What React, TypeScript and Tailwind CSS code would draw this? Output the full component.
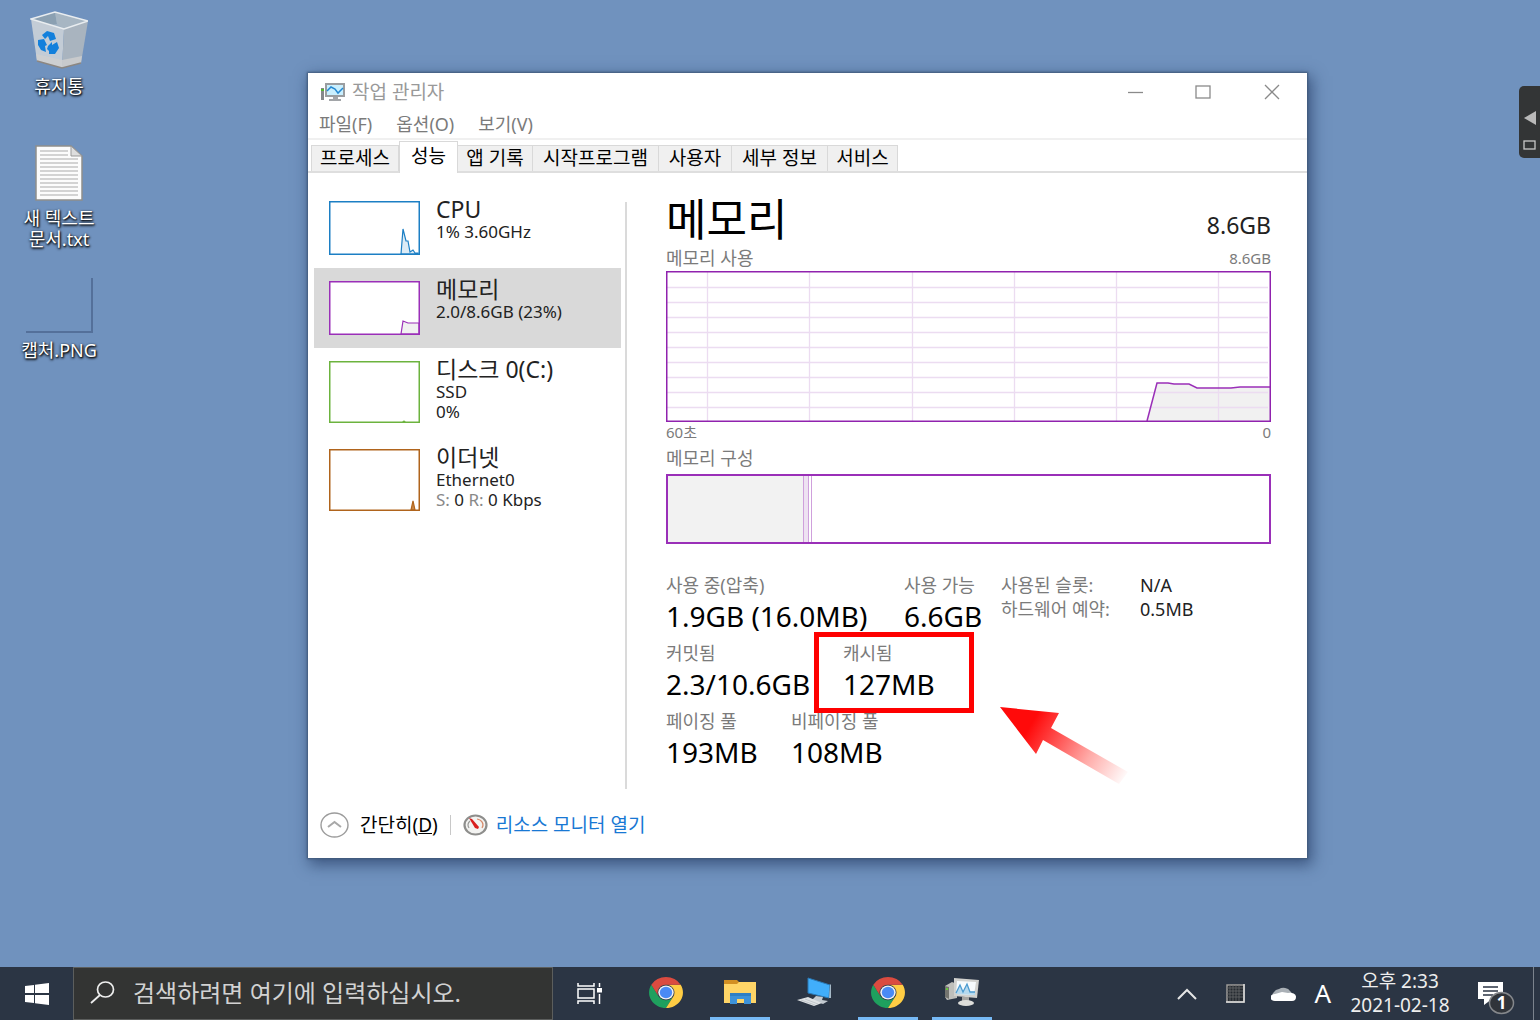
import type { ReactNode } from "react";

const tabs = [
  { label: "프로세스", width: "w-[88px]" },
  { label: "성능", width: "w-[59px]", active: true },
  { label: "앱 기록", width: "w-[75px]" },
  { label: "시작프로그램", width: "w-[126px]" },
  { label: "사용자", width: "w-[73px]" },
  { label: "세부 정보", width: "w-[96px]" },
  { label: "서비스", width: "w-[70px]" },
];

function RecycleBinIcon() {
  return (
    <svg width="58" height="58" viewBox="0 0 58 58" aria-hidden="true">
      <path d="M1 8 25 1 58 10 34 18Z" fill="#9fb2c4" />
      <path d="M1 8 25 1 27 13 9 15Z" fill="#8ba0b2" />
      <path d="M25 1 58 10 34 18 27 13Z" fill="#a7b6c3" />
      <path d="M1 8 34 18 32 57 7 50Z" fill="#c3ccd6" />
      <path d="M34 18 58 10 51 52 32 57Z" fill="#a9b4bf" />
      <path d="M6 43 32 49 52 45 51 52 32 57 7 50Z" fill="#cfcfcf" opacity=".8" />
      <path d="M7 50 32 57 51 52" fill="none" stroke="#8c8782" strokeWidth="1.5" />
      <path d="M1 8 25 1 58 10 34 18Z" fill="none" stroke="#e9edf0" strokeWidth="1.5" />
      <path d="m12 24 5-4 7 2 2 6-6 2-2-5-3 3Z" fill="#1380dc" />
      <path d="m8 29 6-1 3 6-2 1 1 6-5-2-3-5Z" fill="#1380dc" />
      <path d="m18 35 4-4v3l5-3 2 6-4 6-6 0 0-3-2-2Z" fill="#1380dc" />
    </svg>
  );
}

function TextFileIcon() {
  return (
    <svg width="48" height="56" viewBox="0 0 48 56" aria-hidden="true">
      <path d="M1 1H36L47 11V55H1Z" fill="#fcfcfc" stroke="#8f8f8c" strokeWidth="1.5" />
      <path d="M36 1V11H47Z" fill="#dedede" stroke="#999" />
      <path d="M5 6H33M5 10H33M5 14H43M5 18H43M5 22H43M5 26H43M5 30H43M5 34H43M5 38H43M5 42H43M5 46H43M5 50H43" stroke="#a9a9a9" strokeWidth="1.2" />
    </svg>
  );
}

function ChromeIcon() {
  return (
    <svg width="34" height="31" viewBox="2 2 44 44" preserveAspectRatio="none" aria-hidden="true">
      <path d="M5 13 14.5 29.5A11 11 0 0 0 33.5 29.5L24 46A22 22 0 0 1 5 13Z" fill="#1fa05e" />
      <path d="M43 13A22 22 0 0 1 24 46L33.5 29.5A11 11 0 0 0 24 13Z" fill="#ffcd44" />
      <path d="M5 13A22 22 0 0 1 43 13H24A11 11 0 0 0 14.5 29.5Z" fill="#db4b40" />
      <circle cx="24" cy="24" r="10" fill="#f1f1f1" />
      <circle cx="24" cy="24" r="8" fill="#4a8af5" />
    </svg>
  );
}

function FolderIcon() {
  return (
    <svg width="34" height="26" viewBox="0 0 34 26" aria-hidden="true">
      <path d="M1 1H14L16 3V6H1Z" fill="#d28f23" />
      <path d="M16 3H33V24H1V5H14Z" fill="#ffd567" />
      <path d="M7 14H28V25H21V20H14V25H7Z" fill="#3d92d9" />
      <path d="M7 14H28V17H7Z" fill="#2f7fc4" />
    </svg>
  );
}

function RemoteIcon() {
  return (
    <svg width="36" height="30" viewBox="0 0 36 30" aria-hidden="true">
      <path d="M12 1 34 8 33 21 12 16Z" fill="#41aefb" stroke="#2a78b4" />
      <path d="M34 8 35 7V21L33 21Z" fill="#a6b9c7" />
      <path d="M20 19 27 20 26 23 32 24 27 27 16 23Z" fill="#c3cad0" />
      <path d="M1 23 12 20 26 26 18 29Z" fill="#dfe2e4" />
      <path d="M5 23 19 28M9 22 22 27" stroke="#b9bfc4" strokeWidth=".8" />
    </svg>
  );
}

function TaskManagerIcon() {
  return (
    <svg width="36" height="30" viewBox="0 0 36 30" aria-hidden="true">
      <path d="M1 9 8 5 13 7V21L3 23 1 20Z" fill="#bfbfbb" />
      <path d="M1 9 5 10V22L1 20Z" fill="#74746f" />
      <path d="M2 12H4" stroke="#65c73c" strokeWidth="2" />
      <path d="m10 1 25 2-2 18-23-2Z" fill="#d2d2cf" />
      <path d="m13 4 19 1-2 13-18-1Z" fill="#f7fbfd" />
      <path d="m12 16 4-8 3 7 4-8 3 8 5 0V18L12 17Z" fill="#b5d9ee" />
      <path d="m12 16 4-8 3 7 4-8 3 8 5 0" fill="none" stroke="#4c9bd0" strokeWidth="1.3" />
      <path d="M18 20H25V24H18Z" fill="#a6a6a3" />
      <ellipse cx="22" cy="26" rx="8" ry="3" fill="#dededb" />
    </svg>
  );
}

function SmallMonitorIcon() {
  return (
    <svg width="26" height="20" viewBox="0 0 26 20" aria-hidden="true">
      <path d="M1 6H4V18H1Z" fill="#85888b" />
      <path d="M1 8H4" stroke="#55b52f" strokeWidth="2" />
      <rect x="6" y="2" width="18" height="12" fill="#c9effe" stroke="#9a9da0" strokeWidth="2" />
      <path d="m7 9 4-4 4 2 3 4 5-5" fill="none" stroke="#2488d2" strokeWidth="1.5" />
      <path d="M13 15H18V17H21V19H9V17H13Z" fill="#a2a5a8" />
    </svg>
  );
}

function GaugeIcon() {
  return (
    <svg width="25" height="22" viewBox="0 0 25 22" aria-hidden="true">
      <ellipse cx="12.5" cy="11" rx="11" ry="9.5" fill="#f3f3f1" stroke="#8e8e8c" strokeWidth="2.2" />
      <path d="M6 14A7 6 0 0 1 7 7" fill="none" stroke="#9a9a98" strokeWidth="1.2" />
      <path d="M14 5A7 6 0 0 1 19 14" fill="none" stroke="#d88c6d" strokeWidth="1.2" />
      <path d="m6 4 3 1 7 8-1 2-3-1Z" fill="#d91f1f" />
    </svg>
  );
}

function DesktopItem({ icon, children }: { icon: ReactNode; children: ReactNode }) {
  return (
    <button className="flex h-[132px] w-[118px] flex-col items-center pt-3 text-[18px] leading-[21px] text-white [text-shadow:1px_1px_2px_#000,0_1px_3px_#000]">
      <span className="mb-[7px] flex h-[57px] items-end justify-center">{icon}</span>
      <span>{children}</span>
    </button>
  );
}

type DeviceProps = {
  name: string;
  lines: ReactNode[];
  stroke: string;
  area: string;
  fill?: string;
  tall?: boolean;
  selected?: boolean;
};

function DeviceRow({ name, lines, stroke, area, fill = "#f1f1f1", tall, selected }: DeviceProps) {
  const height = tall ? 62 : 54;
  return (
    <button className={`flex w-full items-start pl-[15px] text-left ${tall ? "h-[88px]" : "h-[80px]"} ${selected ? "bg-[#d9d9d9]" : ""}`}>
      <svg className="mt-[13px] shrink-0" width="91" height={height} viewBox={`0 0 91 ${height}`} aria-hidden="true">
        <rect x="1" y="1" width="89" height={height - 2} fill="#fff" />
        <path d={area} fill={fill} stroke={stroke} strokeWidth="1.2" />
        <rect x=".75" y=".75" width="89.5" height={height - 1.5} fill="none" stroke={stroke} strokeWidth="1.5" />
      </svg>
      <span className="ml-4 flex flex-col pt-2">
        <span className="text-[23px] leading-[26px] text-[#222]">{name}</span>
        {lines.map((line, idx) => (
          <span key={idx} className="text-[17px] leading-5 text-[#222]">{line}</span>
        ))}
      </span>
    </button>
  );
}

function MemoryGraph() {
  const rows = [16, 31, 46, 61, 76, 91, 106, 121, 136];
  const cols = [41, 143, 246, 348, 450, 552];
  return (
    <svg className="block h-[151px] w-full" viewBox="0 0 605 151" preserveAspectRatio="none" role="img" aria-label="메모리 사용">
      <path d="M481 150 491 112H502L508 113H523L531 117H565L574 116H604V150Z" fill="#f1f1f1" />
      <g stroke="#ecdcf1" strokeWidth="1.3">
        {rows.map((y) => <path key={y} d={`M1 ${y + 0.5}H602`} />)}
        {cols.map((x) => <path key={x} d={`M${x + 0.5} 1V150`} />)}
      </g>
      <path d="M481 150 491 112H502L508 113H523L531 117H565L574 116H604" fill="none" stroke="#9a2fb8" strokeWidth="1.5" />
      <rect x=".75" y=".75" width="603.5" height="149.5" fill="none" stroke="#9022ae" strokeWidth="1.5" />
    </svg>
  );
}

function Stat({ label, value, width = "" }: { label: string; value: string; width?: string }) {
  return (
    <div className={`shrink-0 whitespace-nowrap ${width}`}>
      <dt className="text-[18px] leading-6 text-[#7b7b7b]">{label}</dt>
      <dd className="text-[28px] leading-[38px] text-black">{value}</dd>
    </div>
  );
}

function TaskManager() {
  return (
    <section className="absolute top-[73px] right-[233px] left-[308px] bg-white shadow-[0_0_2px_1px_#3f5878,3px_5px_14px_2px_rgba(20,40,80,0.55)]">
      <header className="flex h-[37px] items-center pl-3">
        <SmallMonitorIcon />
        <h1 className="ml-[6px] flex-1 text-[19px] leading-6 text-[#999]">작업 관리자</h1>
        <div className="flex text-[#8a8a8a]">
          <button aria-label="최소화" className="flex h-8 w-[68px] items-center justify-center">
            <svg width="16" height="16" viewBox="0 0 16 16"><path d="M1 8.5H16" stroke="currentColor" strokeWidth="1.3" /></svg>
          </button>
          <button aria-label="최대화" className="flex h-8 w-[68px] items-center justify-center">
            <svg width="16" height="16" viewBox="0 0 16 16"><rect x="1" y="2" width="14" height="12" fill="none" stroke="currentColor" strokeWidth="1.3" /></svg>
          </button>
          <button aria-label="닫기" className="flex h-8 w-[70px] items-center justify-center">
            <svg width="16" height="16" viewBox="0 0 16 16"><path d="M1 1 15 15M15 1 1 15" stroke="currentColor" strokeWidth="1.3" /></svg>
          </button>
        </div>
      </header>

      <nav className="flex h-[30px] items-center gap-6 border-b-2 border-[#f0f0f0] pl-[11px] text-[18px] leading-6 text-[#7b7b7b]">
        <button>파일(F)</button>
        <button>옵션(O)</button>
        <button>보기(V)</button>
      </nav>

      {/* Tabs */}
      <div role="tablist" className="flex h-[33px] items-end border-b-2 border-[#dedede] pl-[3px] text-[19px] leading-6 text-black">
        {tabs.map((tab) => (
          <button
            key={tab.label}
            role="tab"
            aria-selected={!!tab.active}
            className={`shrink-0 whitespace-nowrap border-[#d9d9d9] ${tab.width} ${
              tab.active ? "-mb-[2px] h-[32px] border border-b-0 bg-white pb-1" : "h-[26px] border-t border-r bg-[#f0f0f0] pb-[2px] first:border-l"
            }`}
          >
            {tab.label}
          </button>
        ))}
      </div>

      <div className="flex">
        {/* Devices */}
        <aside className="w-[313px] shrink-0 pt-[15px] pl-[6px]">
          <DeviceRow name="CPU" lines={["1% 3.60GHz"]} stroke="#1c7fc4" fill="#dcebf5" area="M72 53 74 28 77 40H79L81 51 84 49 86 52 89 52V53Z" />
          <DeviceRow name="메모리" lines={["2.0/8.6GB (23%)"]} stroke="#9a2fb8" area="M72 53 74 40 79 42H90V53Z" selected />
          <DeviceRow name="디스크 0(C:)" lines={["SSD", "0%"]} stroke="#6cb33e" area="M74 61 75 60 76 61Z" tall />
          <DeviceRow
            name="이더넷"
            lines={[
              "Ethernet0",
              <>
                <span className="text-[#888]">S:</span> 0 <span className="text-[#888]">R:</span> 0 Kbps
              </>,
            ]}
            stroke="#b0641c"
            fill="#c98848"
            area="M82 61 84 52 86 61Z"
            tall
          />
        </aside>
        <div className="mt-[29px] ml-1 w-[2px] shrink-0 bg-[#dadada]" />

        {/* Memory details */}
        <main className="min-w-0 flex-1 pt-[18px] pr-9 pb-[18px] pl-[39px]">
          <div className="flex h-[56px] items-center justify-between">
            <h2 className="text-[44px] leading-[56px] text-black">메모리</h2>
            <span className="pt-3 text-[23px] leading-8 text-[#222]">8.6GB</span>
          </div>
          <div className="flex h-6 items-center justify-between pb-[3px] text-[#7b7b7b]">
            <span className="text-[18px] leading-5">메모리 사용</span>
            <span className="text-[15px] leading-5">8.6GB</span>
          </div>
          <MemoryGraph />
          <div className="flex h-5 items-center justify-between text-[15px] text-[#7b7b7b]">
            <span>60초</span>
            <span>0</span>
          </div>
          <h3 className="pt-[2px] pb-[2px] text-[18px] leading-7 text-[#7b7b7b]">메모리 구성</h3>
          <div className="flex h-[70px] border-2 border-[#9a2fb8]">
            <div className="w-[22.5%] bg-[#f2f2f2]" />
            <div className="w-[6px] border-x border-[#cfa0dc] bg-[#eee2f2]" />
            <div className="w-[3px] border-r border-[#cfa0dc]" />
          </div>

          <div className="relative mt-[29px] flex">
            <dl className="flex w-[335px] shrink-0 flex-col gap-[6px]">
              <div className="flex">
                <Stat label="사용 중(압축)" value="1.9GB (16.0MB)" width="w-[238px]" />
                <Stat label="사용 가능" value="6.6GB" />
              </div>
              <div className="flex">
                <Stat label="커밋됨" value="2.3/10.6GB" width="w-[177px]" />
                <Stat label="캐시됨" value="127MB" />
              </div>
              <div className="flex">
                <Stat label="페이징 풀" value="193MB" width="w-[125px]" />
                <Stat label="비페이징 풀" value="108MB" />
              </div>
            </dl>
            <dl className="grid h-12 grid-cols-[139px_auto] text-[18px] leading-6 whitespace-nowrap">
              <dt className="text-[#7b7b7b]">사용된 슬롯:</dt>
              <dd className="text-[#222]">N/A</dd>
              <dt className="text-[#7b7b7b]">하드웨어 예약:</dt>
              <dd className="text-[#222]">0.5MB</dd>
            </dl>
            {/* Callout on the cached value */}
            <div className="absolute top-[59px] left-[148px] h-[81px] w-[160px] border-[5px] border-[#fe0000]" />
            <svg className="absolute top-[133px] left-[334px]" width="130" height="78" viewBox="0 0 130 78" aria-hidden="true">
              <defs>
                <linearGradient id="arrow" gradientUnits="userSpaceOnUse" x1="30" y1="20" x2="126" y2="75">
                  <stop offset="0" stopColor="#ff0a0a" />
                  <stop offset=".2" stopColor="#ff3d3d" />
                  <stop offset=".6" stopColor="#ffaba8" />
                  <stop offset="1" stopColor="#fff" />
                </linearGradient>
              </defs>
              <path d="M0 1 59 7 51 22 128 66 119 78 43 34 36 48Z" fill="url(#arrow)" />
            </svg>
          </div>
        </main>
      </div>

      <footer className="flex h-[69px] items-center pt-[2px] pl-3 text-[19px] leading-6">
        <button className="flex items-center text-black">
          <svg width="29" height="26" viewBox="0 0 29 26" aria-hidden="true">
            <ellipse cx="14.5" cy="13" rx="13.5" ry="12" fill="#fff" stroke="#9c9c9c" strokeWidth="1.4" />
            <path d="m8 15 6.5-5 6.5 5" fill="none" stroke="#a8a8a8" strokeWidth="2" />
          </svg>
          <span className="ml-[11px]">간단히(<u>D</u>)</span>
        </button>
        <span className="mx-3 h-5 w-px bg-[#c8c8c8]" />
        <GaugeIcon />
        <a href="#resmon" className="ml-2 text-[#1878d4]">리소스 모니터 열기</a>
      </footer>
    </section>
  );
}

function TaskbarButton({ label, open, children }: { label: string; open?: boolean; children: ReactNode }) {
  return (
    <button aria-label={label} className="flex h-full w-[74px] shrink-0 flex-col items-center px-[7px]">
      <span className="flex flex-1 items-center">{children}</span>
      <span className={`h-[3px] w-full ${open ? "bg-[#76b9f5]" : ""}`} />
    </button>
  );
}

function Taskbar() {
  return (
    <footer className="flex h-[53px] shrink-0 items-center bg-[#2b3544] text-white">
      <button aria-label="시작" className="flex h-full w-[73px] shrink-0 items-center justify-center">
        <svg width="24" height="22" viewBox="0 0 24 22" aria-hidden="true">
          <path d="M0 3 9 2V10H0ZM10 1.7 24 0V10H10ZM0 12H9V20L0 19ZM10 12H24V22L10 20.3Z" fill="#fff" />
        </svg>
      </button>
      <label className="flex h-full w-[480px] items-center border border-[#5c5e5d] bg-[#333433] pb-[2px] pl-4">
        <svg width="25" height="23" viewBox="0 0 25 23" aria-hidden="true">
          <ellipse cx="15.5" cy="8.5" rx="8" ry="7.5" fill="none" stroke="#eee" strokeWidth="1.7" />
          <path d="m10 14-9 8" stroke="#eee" strokeWidth="1.8" />
        </svg>
        <input aria-label="검색" placeholder="검색하려면 여기에 입력하십시오." className="ml-[18px] min-w-0 flex-1 bg-transparent text-[24px] leading-8 outline-none placeholder:text-[#d2d2d2]" />
      </label>
      <button aria-label="작업 보기" className="flex h-full w-[74px] shrink-0 items-center justify-center">
        <svg width="26" height="21" viewBox="0 0 26 21" fill="none" stroke="#fff" strokeWidth="1.5" aria-hidden="true">
          <path d="M1 0V3H17V0M1 21V18H17V21M1 6H17V15H1ZM22.5 0V4M22.5 11V21" />
          <path d="M20 5H25V9.5H20Z" fill="#fff" stroke="none" />
        </svg>
      </button>
      <div className="ml-[2px] flex h-full">
        <TaskbarButton label="Chrome"><ChromeIcon /></TaskbarButton>
        <TaskbarButton label="파일 탐색기" open><FolderIcon /></TaskbarButton>
        <TaskbarButton label="원격 데스크톱"><RemoteIcon /></TaskbarButton>
        <TaskbarButton label="Chrome" open><ChromeIcon /></TaskbarButton>
        <TaskbarButton label="작업 관리자" open><TaskManagerIcon /></TaskbarButton>
      </div>

      {/* Tray */}
      <div className="ml-auto flex h-full items-center">
        <button aria-label="숨겨진 아이콘 표시" className="mr-[29px]">
          <svg className="block" width="20" height="12" viewBox="0 0 20 12"><path d="m1 11 9-9 9 9" fill="none" stroke="#e6e6e6" strokeWidth="2" /></svg>
        </button>
        <svg className="mr-[26px]" width="19" height="19" viewBox="0 0 19 19" aria-hidden="true">
          <rect x="1" y="1" width="17" height="17" fill="#262b31" stroke="#9d9b98" strokeWidth="1.5" />
          <path d="M4 1V18M7 1V18M10 1V18M13 1V18M1 4H18M1 7H18M1 10H18M1 13H18" stroke="#65676a" strokeWidth=".8" />
          <path d="M18 0V18H0" fill="none" stroke="#ddd" strokeWidth="1.5" />
        </svg>
        <svg className="mr-[18px]" width="25" height="15" viewBox="0 0 25 15" aria-hidden="true">
          <path d="M4 13A4 4 0 0 1 3 6 6 5 0 0 1 8 3 7 5 0 0 1 19 5 5 5 0 0 1 21 8L9 14Z" fill="#aab0b6" />
          <path d="M4 15A4 3 0 0 1 4 8L11 6 17 7A6 4 0 0 1 25 11 4 4 0 0 1 21 15Z" fill="#fff" />
        </svg>
        <span className="mr-[18px] pb-[2px] text-[26px] leading-8">A</span>
        <time className="w-[102px] pb-[2px] text-center text-[19px] leading-6 whitespace-nowrap text-[#eee]">
          오후 2:33
          <br />
          2021-02-18
        </time>
        <button aria-label="알림" className="ml-[26px] flex items-center pt-2">
          <svg width="38" height="34" viewBox="0 0 38 34" aria-hidden="true">
            <path d="M1 1H26V18H15L7 24V18H1Z" fill="#fff" />
            <path d="M6 6H21M6 10H21M6 14H16" stroke="#2b3544" strokeWidth="1.5" />
            <ellipse cx="24.5" cy="22" rx="12" ry="10.5" fill="#30343a" stroke="#85888c" strokeWidth="1.5" />
            <text x="24.5" y="28" textAnchor="middle" fontSize="17" fontWeight="700" fill="#fff">1</text>
          </svg>
        </button>
        <span className="ml-[18px] h-full w-[7px] border-l border-[#7b838d]" />
      </div>
    </footer>
  );
}

export default function App() {
  return (
    <div className="flex h-screen flex-col overflow-hidden bg-[#7092be] font-['Noto_Sans','Noto_Sans_CJK_KR',sans-serif]">
      <div className="relative min-h-0 flex-1">
        <DesktopItem icon={<RecycleBinIcon />}>휴지통</DesktopItem>
        <DesktopItem icon={<TextFileIcon />}>새 텍스트<br />문서.txt</DesktopItem>
        <DesktopItem icon={<span className="h-[55px] w-[67px] border-r-2 border-b-2 border-[#54709a]" />}>캡처.PNG</DesktopItem>

        <TaskManager />

        <button aria-label="사이드 패널" className="absolute top-[86px] right-0 flex h-[72px] w-[21px] justify-center rounded-l-[5px] bg-[#333536]">
          <svg width="14" height="72" viewBox="0 0 14 72" aria-hidden="true">
            <path d="M1 32 13 25V39Z" fill="#b9b9b9" />
            <rect x="1" y="55" width="11" height="8" fill="none" stroke="#c9c9c9" strokeWidth="1.3" />
          </svg>
        </button>
      </div>
      <Taskbar />
    </div>
  );
}
